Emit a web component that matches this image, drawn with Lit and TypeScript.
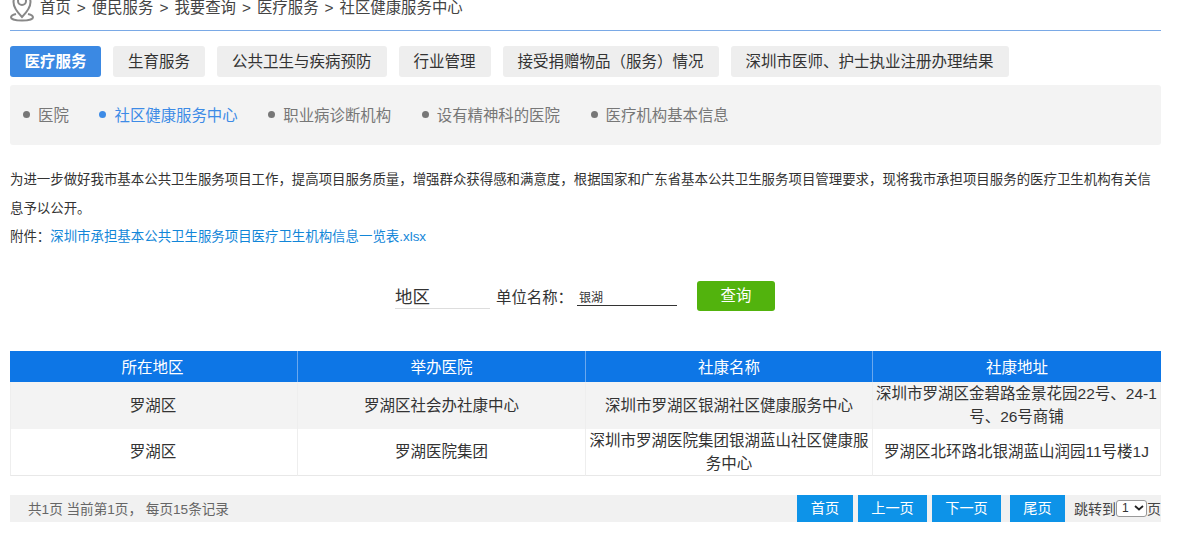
import { LitElement, html, css } from "lit";
import { customElement } from "lit/decorators.js";

@customElement("app-root")
export class AppRoot extends LitElement {
  static styles = css`
    :host { display: block; width: 1201px; height: 538px; overflow: hidden; background: #fff; color: #333;
      font-family: "Liberation Sans", "Noto Sans CJK SC", sans-serif; font-size: 15.4px; }
    .page { padding: 0 40px 0 10px; }
    .crumb { height: 30px; border-bottom: 1px solid #7aa9e6; display: flex; align-items: flex-start; gap: 6px; color: #444; line-height: 15px; }
    .crumb svg { display: block; flex: none; }
    .sep { margin: 0 6px; }
    .tabs { display: flex; gap: 12px; margin-top: 15px; font-size: 15.5px; }
    .tab { height: 31px; line-height: 31px; padding: 0 15px; background: #eee; border-radius: 3px; color: #333; }
    .tab.on { background: #3b89e3; color: #fff; font-weight: 700; padding: 0 14.5px; }
    .sub { margin-top: 8px; height: 60px; background: #f3f3f3; border-radius: 3px; display: flex; align-items: center; gap: 30.7px; padding: 0 0 2px 13px; box-sizing: border-box; color: #777; }
    .sub span { display: flex; align-items: center; }
    .sub span::before { content: ""; width: 7px; height: 7px; border-radius: 50%; background: currentColor; margin-right: 8px; }
    .sub span.on { color: #3d8be6; }
    .intro { margin: 21px 0 0; font-size: 13.43px; line-height: 28.5px; color: #333; }
    .intro a { color: #1286d8; text-decoration: none; }
    .form { display: flex; align-items: center; margin-top: 29px; height: 30px; padding-left: 385px; }
    .area { width: 95px; font-size: 17.5px; height: 25px; line-height: 27px; border-bottom: 1px solid #ddd; color: #333; margin-top: 1px; box-sizing: border-box; }
    .label { margin-left: 6px; width: 81px; font-size: 15.4px; color: #333; white-space: nowrap; }
    .input { width: 100px; height: 17px; border-bottom: 1px solid #333; font-size: 12px; line-height: 18px; padding-left: 2px; box-sizing: border-box; margin-top: 3px; color: #333; }
    .btn { margin-left: 20px; width: 78px; height: 30px; line-height: 30px; background: #52b30d; color: #fff; text-align: center; border-radius: 3px; }
    table { margin-top: 40px; width: 1151px; border-collapse: separate; border-spacing: 0; table-layout: fixed; font-size: 15.5px; }
    th { background: #0d76e6; color: #fff; font-weight: 400; height: 31px; padding: 0; border-right: 1px solid #6aa8ee; box-sizing: border-box; }
    th:last-child { border-right: 0; }
    th:first-child { padding-right: 2px; }
    td { height: 47px; padding: 0 1px; text-align: center; line-height: 23px; border-right: 1px solid #eee; border-bottom: 1px solid #e8e8e8; color: #333; box-sizing: border-box; }
    td:first-child { border-left: 1px solid #eee; padding-right: 3px; }
    tr.alt td { background: #f3f3f3; border-bottom: 0; }
    .pager { margin-top: 19px; height: 27px; background: #f1f1f1; display: flex; align-items: center; font-size: 13.6px; color: #666; padding-left: 18px; }
    .pager .info { flex: 1; }
    .pb { height: 27px; line-height: 27px; background: #0d93e8; color: #fff; text-align: center; margin-right: 5px; font-size: 14.2px; }
    .jump { display: flex; align-items: center; color: #444; margin-left: 4px; white-space: nowrap; font-size: 14px; }
    .sel { width: 31px; height: 17px; box-sizing: border-box; border: 1px solid #999; border-radius: 3px; background: #fff; font-size: 12px; line-height: 15px; display: flex; align-items: center; gap: 5px; padding-left: 5px; color: #333; }
  `;

  render() {
    const tabs = ["生育服务", "公共卫生与疾病预防", "行业管理", "接受捐赠物品（服务）情况", "深圳市医师、护士执业注册办理结果"];
    const subs = ["医院", "社区健康服务中心", "职业病诊断机构", "设有精神科的医院", "医疗机构基本信息"];
    const crumbs = ["首页", "便民服务", "我要查询", "医疗服务", "社区健康服务中心"];
    return html`<div class="page">
      <div class="crumb">
        <svg width="24" height="24" viewBox="0 0 24 24" fill="none" stroke="#888" stroke-width="2">
          <path d="M12 17 C8 13 3.500 8 3.500 2 A8.500 8.500 0 0 1 20.500 2 C20.500 8 16 13 12 17 Z" />
          <circle cx="12" cy="1" r="4" />
          <path d="M6 14 C2.800 14.800 1 15.800 1 17.200 C1 19.200 6 20.500 12 20.500 C18 20.500 23 19.200 23 17.200 C23 15.800 21.200 14.800 18 14" />
        </svg>
        <span>${crumbs.map((c, i) => html`${i ? html`<span class="sep">&gt;</span>` : ""}${c}`)}</span>
      </div>
      <div class="tabs">
        <div class="tab on">医疗服务</div>
        ${tabs.map((t) => html`<div class="tab">${t}</div>`)}
      </div>
      <div class="sub">
        ${subs.map((s, i) => html`<span class=${i === 1 ? "on" : ""}>${s}</span>`)}
      </div>
      <p class="intro">
        为进一步做好我市基本公共卫生服务项目工作，提高项目服务质量，增强群众获得感和满意度，根据国家和广东省基本公共卫生服务项目管理要求，现将我市承担项目服务的医疗卫生机构有关信息予以公开。<br />
        附件：<a>深圳市承担基本公共卫生服务项目医疗卫生机构信息一览表.xlsx</a>
      </p>
      <div class="form">
        <div class="area">地区</div>
        <div class="label">单位名称：</div>
        <div class="input">银湖</div>
        <div class="btn">查询</div>
      </div>
      <table>
        <colgroup><col style="width:288px" /><col style="width:288px" /><col style="width:287px" /><col style="width:288px" /></colgroup>
        <thead><tr><th>所在地区</th><th>举办医院</th><th>社康名称</th><th>社康地址</th></tr></thead>
        <tbody>
          <tr class="alt"><td>罗湖区</td><td>罗湖区社会办社康中心</td><td>深圳市罗湖区银湖社区健康服务中心</td><td>深圳市罗湖区金碧路金景花园22号、24-1号、26号商铺</td></tr>
          <tr><td>罗湖区</td><td>罗湖医院集团</td><td>深圳市罗湖医院集团银湖蓝山社区健康服务中心</td><td>罗湖区北环路北银湖蓝山润园11号楼1J</td></tr>
        </tbody>
      </table>
      <div class="pager">
        <div class="info">共1页 当前第1页， 每页15条记录</div>
        <div class="pb" style="width:56px">首页</div>
        <div class="pb" style="width:69px">上一页</div>
        <div class="pb" style="width:69px;margin-right:9px">下一页</div>
        <div class="pb" style="width:55px">尾页</div>
        <div class="jump">跳转到<div class="sel">1<svg width="10" height="6" viewBox="0 0 10 6" fill="none" stroke="#222" stroke-width="1.800"><path d="M1 1l4 3.500L9 1" /></svg></div>页</div>
      </div>
    </div>`;
  }
}
